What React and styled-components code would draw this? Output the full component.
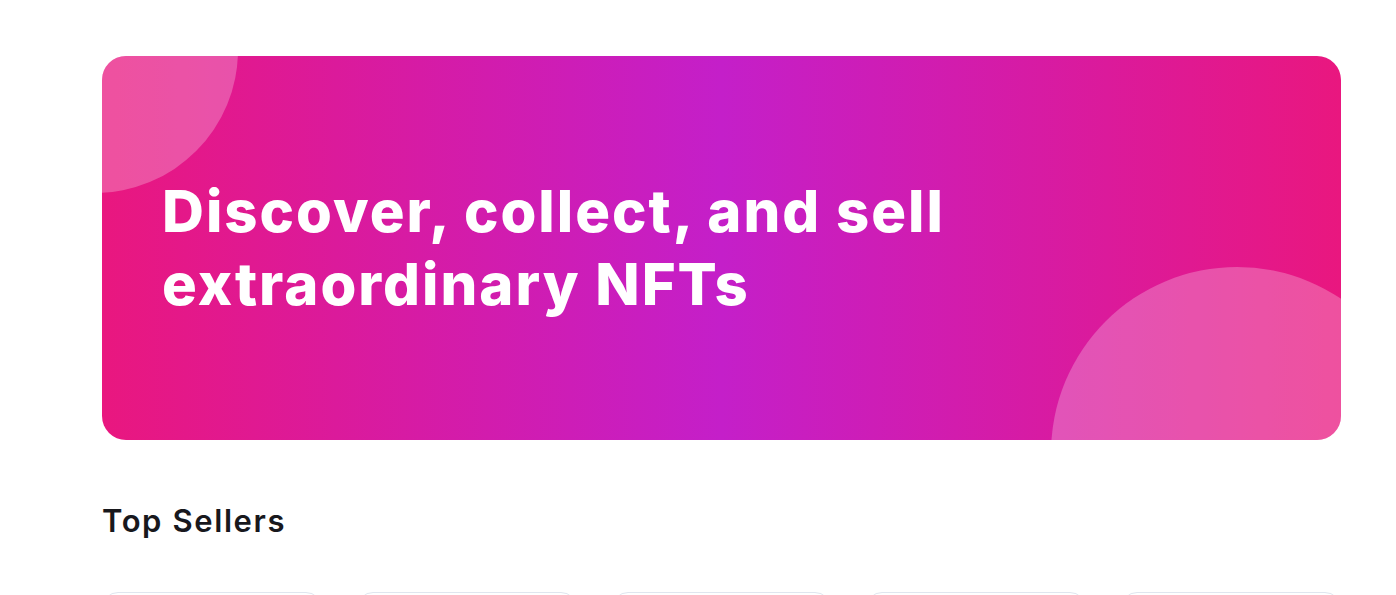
import styled, { createGlobalStyle } from "styled-components";

const GlobalStyle = createGlobalStyle`
  * { box-sizing: border-box; }
  body {
    margin: 0;
    background: #ffffff;
    font-family: "Inter", "Liberation Sans", sans-serif;
    overflow: hidden;
  }
`;

const sellers = [1, 2, 3, 4, 5];

const App = () => {
  return (
    <>
      <GlobalStyle />
      <Page>
        <Hero>
          <Bubble size={286} left={-150} top={-149} />
          <Bubble size={372} left={949} top={211} />
          <HeroTitle>
            Discover, collect, and sell
            <br />
            extraordinary NFTs
          </HeroTitle>
        </Hero>
        <SectionTitle>Top Sellers</SectionTitle>
        <SellerRow>
          {sellers.map((s) => (
            <SellerCard key={s} />
          ))}
        </SellerRow>
      </Page>
    </>
  );
};

const Page = styled.div`
  padding: 56px 55px 0 102px;
`;

const Hero = styled.div`
  position: relative;
  height: 384px;
  border-radius: 24px;
  overflow: hidden;
  display: flex;
  align-items: center;
  padding-left: 60px;
  background: linear-gradient(90deg, #e9177f 0%, #c41fc9 50%, #e9177f 100%);
`;

const Bubble = styled.span`
  position: absolute;
  width: ${({ size }) => size}px;
  height: ${({ size }) => size}px;
  left: ${({ left }) => left}px;
  top: ${({ top }) => top}px;
  border-radius: 50%;
  background: rgba(255, 255, 255, 0.25);
`;

const HeroTitle = styled.h1`
  position: relative;
  margin: 0;
  color: #ffffff;
  font-size: 58px;
  line-height: 73px;
  font-weight: 800;
  letter-spacing: 2px;
`;

const SectionTitle = styled.h2`
  margin: 58px 0 0;
  font-size: 31px;
  line-height: 45px;
  font-weight: 600;
  letter-spacing: 1.6px;
  color: #18181d;
`;

const SellerRow = styled.div`
  display: grid;
  grid-template-columns: repeat(5, 1fr);
  gap: 35px;
  margin-top: 49px;
`;

const SellerCard = styled.div`
  height: 240px;
  border: 1px solid #e0e6ef;
  border-radius: 16px;
  background: #ffffff;
`;

export default App;
